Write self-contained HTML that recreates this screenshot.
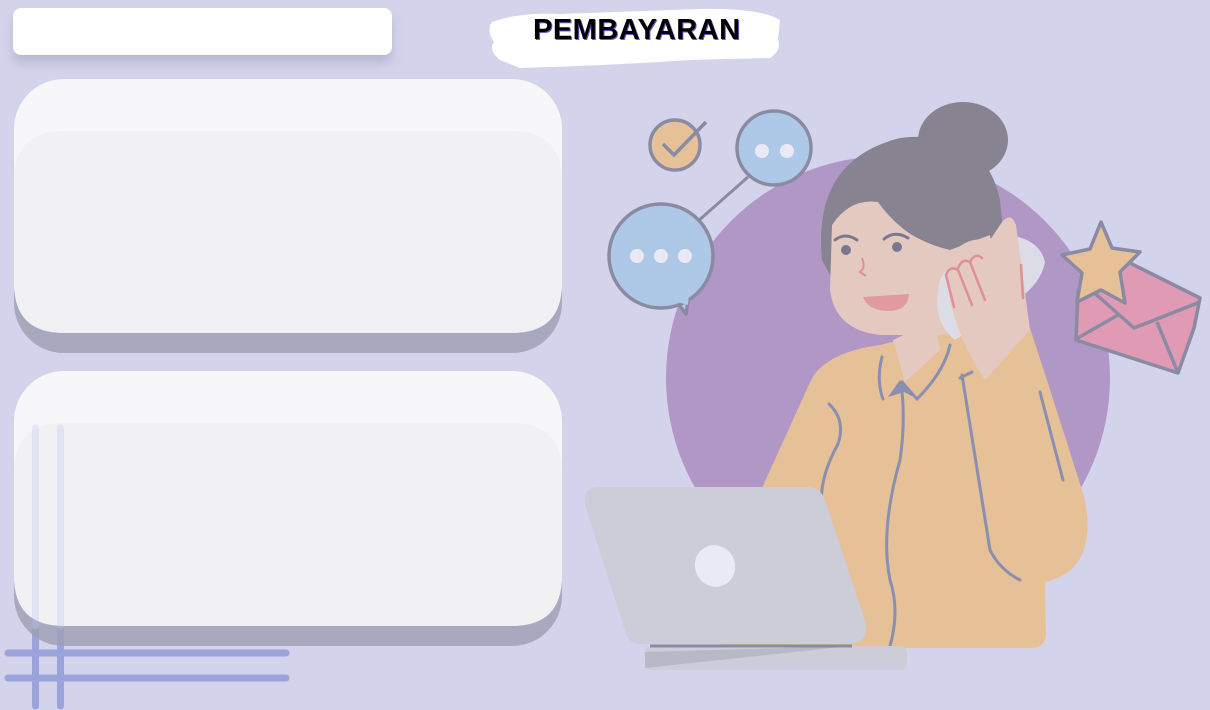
<!DOCTYPE html>
<html><head><meta charset="utf-8"><style>
html,body{margin:0;padding:0}
body{width:1210px;height:710px;background:#d3d3eb;position:relative;overflow:hidden;font-family:"Liberation Sans",sans-serif}
.inp{position:absolute;left:13px;top:8px;width:379px;height:47px;background:#fff;border-radius:8px;box-shadow:0 8px 10px rgba(150,150,185,.45)}
.title{position:absolute;left:533px;top:14px;font:bold 29px "Liberation Sans",sans-serif;color:#000;letter-spacing:.5px;text-shadow:1px 1px 0 #6a5acd}
</style></head><body>
<svg width="1210" height="710" style="position:absolute;left:0;top:0">
<path d="M492 22 Q520 12 560 14 L700 9 Q760 8 780 20 L778 40 Q782 50 770 58 L690 60 Q600 66 520 68 L500 60 Q488 50 494 42 Q486 30 492 22Z" fill="#fff"/>
<g stroke="#9ba3db" stroke-width="7" stroke-linecap="round">
<line x1="35.5" y1="428" x2="35.5" y2="706"/><line x1="60.5" y1="428" x2="60.5" y2="706"/>
<line x1="8" y1="653" x2="286" y2="653"/><line x1="8" y1="678" x2="286" y2="678"/>
</g>
<rect x="14" y="99" width="548" height="254" rx="50" fill="#9d9fb4" opacity=".8"/>
<rect x="14" y="79" width="548" height="254" rx="50" fill="#f7f7fa"/>
<path d="M14 181 Q14 131 64 131 L512 131 Q562 131 562 181 L562 283 Q562 333 512 333 L64 333 Q14 333 14 283Z" fill="#f1f1f4"/>
<rect x="14" y="391" width="548" height="255" rx="50" fill="#9d9fb4" opacity=".8"/>
<rect x="14" y="371" width="548" height="255" rx="50" fill="#f7f7fa"/>
<path d="M14 473 Q14 423 64 423 L512 423 Q562 423 562 473 L562 576 Q562 626 512 626 L64 626 Q14 626 14 576Z" fill="#f1f1f4"/>
<g stroke="#c5cbf0" stroke-width="7" stroke-linecap="round" opacity=".35">
<line x1="35.5" y1="428" x2="35.5" y2="626"/><line x1="60.5" y1="428" x2="60.5" y2="626"/>
</g>

<circle cx="888" cy="378" r="222" fill="#b197c5"/>
<path d="M762 488 L812 378 Q828 352 880 345 L900 340 L960 330 L1030 328 Q1060 420 1085 500 Q1098 570 1045 582 L1046 636 Q1044 648 1030 648 L720 648 Z" fill="#e6c096"/>
<path d="M893 340 L905 382 L940 350 L935 320 Z" fill="#e4c9c0"/>
<g fill="none" stroke="#8a8fb0" stroke-width="3" stroke-linecap="round">
<path d="M882 357 Q876 380 883 399 M902 382 L917 399 Q944 372 950 345"/>
<path d="M901 383 Q906 420 900 460 Q880 530 890 580 Q900 610 890 646"/>
<path d="M829 404 Q846 420 838 444 Q818 480 822 510"/>
<path d="M960 378 L972 372 M962 375 L990 550 Q1000 570 1020 580"/>
<path d="M1040 392 L1063 480"/>
</g>
<path d="M900 380 L888 397 L904 392 L916 398Z" fill="#8a8fb0"/>
<ellipse cx="963" cy="140" rx="45" ry="38" fill="#878391"/>
<path d="M822 260 Q812 160 900 138 Q985 128 1000 200 L1005 250 L830 275Z" fill="#878391"/>
<path d="M832 225 Q850 198 878 202 Q905 240 950 250 L990 235 L998 300 Q990 330 940 335 L880 335 Q835 330 830 290Z" fill="#e4c9c0"/>
<path d="M878 202 Q910 245 945 245 Q985 240 990 210 L992 190 Q960 190 878 202Z" fill="#878391"/>
<circle cx="846" cy="250" r="5" fill="#7a7890"/><circle cx="897" cy="247" r="5" fill="#7a7890"/>
<g fill="none" stroke="#7a7890" stroke-width="3" stroke-linecap="round"><path d="M835 240 Q845 232 857 240"/><path d="M884 239 Q895 230 908 238"/></g>
<path d="M862 258 Q866 268 860 272 L866 276" fill="none" stroke="#e08f95" stroke-width="2"/>
<path d="M863 297 L909 294 Q908 310 890 311 Q868 311 863 297Z" fill="#e09aa0"/>
<path d="M940 280 Q960 240 1010 235 Q1040 240 1045 262 Q1040 290 1000 310 L955 340 Q930 320 940 280Z" fill="#dcdce6"/>
<path d="M945 265 Q960 235 990 240 L1000 225 Q1010 210 1016 225 L1030 330 L985 380 Q950 330 945 265Z" fill="#e4c9c0"/>
<g fill="none" stroke="#e08f95" stroke-width="2.5" stroke-linecap="round"><path d="M954 307 L946 275 Q950 265 958 270 L972 305 M958 268 Q962 258 970 262 L985 300 M970 262 Q975 252 982 258 M1021 265 L1023 298"/></g>
<line x1="697" y1="222" x2="748" y2="177" stroke="#8a8aa3" stroke-width="3"/>
<path d="M672 296 L686 314 L690 290Z" fill="#aec8e8" stroke="#8a8aa3" stroke-width="3.5" stroke-linejoin="round"/>
<circle cx="661" cy="256" r="52" fill="#aec8e8" stroke="#8a8aa3" stroke-width="3.5"/>
<path d="M670 300 L688 305 L689 293Z" fill="#aec8e8"/>
<circle cx="637" cy="256" r="7" fill="#e9eaf6"/><circle cx="661" cy="256" r="7" fill="#e9eaf6"/><circle cx="685" cy="256" r="7" fill="#e9eaf6"/>
<circle cx="774" cy="148" r="37" fill="#aec8e8" stroke="#8a8aa3" stroke-width="3.5"/>
<circle cx="762" cy="151" r="7" fill="#e9eaf6"/><circle cx="787" cy="151" r="7" fill="#e9eaf6"/>
<circle cx="675" cy="145" r="25" fill="#e6c096" stroke="#8a8aa3" stroke-width="3.5"/>
<path d="M663 144 L674 155 L706 122" fill="none" stroke="#8a8aa3" stroke-width="3.5"/>
<path d="M1078 292 L1098 252 L1104 250 L1200 298 L1194 328 L1178 373 L1076 340Z" fill="#e09ab4" stroke="#8a8aa3" stroke-width="3.5" stroke-linejoin="round"/>
<path d="M1090 289 L1134 328 L1200 302 M1076 339 L1118 315 M1178 373 L1157 322" fill="none" stroke="#8a8aa3" stroke-width="3.5"/>
<path d="M1101 222 L1112 248 L1140 252 L1120 272 L1125 303 L1101 290 L1077 302 L1082 273 L1062 255 L1090 249Z" fill="#e6c096" stroke="#8a8aa3" stroke-width="3.5" stroke-linejoin="round"/>
<path d="M645 652 Q645 646 652 646 L900 646 Q907 646 907 654 L907 664 Q907 670 900 670 L652 670 Q645 670 645 664Z" fill="#cccdd8"/>
<path d="M645 652 L850 646 L645 668Z" fill="#b8b9c6"/>
<path d="M598 487 L808 487 Q820 487 825 500 L866 624 Q868 644 850 644 L640 644 Q630 644 626 634 L585 505 Q583 487 598 487Z" fill="#cccdd8"/>
<line x1="650" y1="646" x2="852" y2="646" stroke="#8a8aa3" stroke-width="3"/>
<ellipse cx="715" cy="566" rx="20" ry="21" transform="rotate(-25 715 566)" fill="#e9eaf6"/>
</svg>
<div class="inp"></div>
<div class="title">PEMBAYARAN</div>
</body></html>
